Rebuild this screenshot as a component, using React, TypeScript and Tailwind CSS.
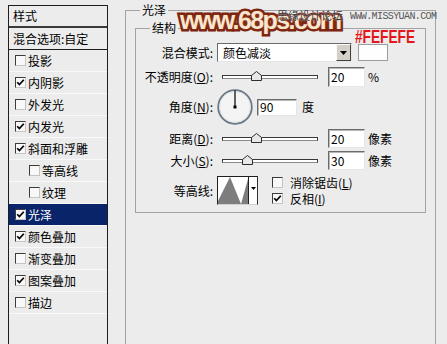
import React from 'react'

type StyleItem = { name: string; on: boolean; sub?: boolean; active?: boolean }

const styleItems: StyleItem[] = [
  { name: '投影', on: false },
  { name: '内阴影', on: true },
  { name: '外发光', on: false },
  { name: '内发光', on: true },
  { name: '斜面和浮雕', on: true },
  { name: '等高线', on: false, sub: true },
  { name: '纹理', on: false, sub: true },
  { name: '光泽', on: true, active: true },
  { name: '颜色叠加', on: true },
  { name: '渐变叠加', on: false },
  { name: '图案叠加', on: true },
  { name: '描边', on: false },
]

function Box({ checked = false }: { checked?: boolean }) {
  return (
    <span className="flex h-[11px] w-[11px] shrink-0 items-center justify-center border border-t-[#3c3c3c] border-l-[#3c3c3c] border-r-[#c4c4c4] border-b-[#c4c4c4] bg-[#f8f8f8]">
      {checked && (
        <svg width="9" height="9" viewBox="0 0 9 9">
          <path d="M1.2 4.2 L3.4 6.6 L7.8 1.8" stroke="#000" strokeWidth="1.7" fill="none" />
        </svg>
      )}
    </span>
  )
}

function Slider({ value, max }: { value: number; max: number }) {
  const left = Math.round((value / max) * 96) + 14
  return (
    <div className="relative ml-[9px] h-[4px] w-[96px] border border-[#383838] border-b-[#8a8a8a] bg-white">
      <svg className="absolute top-[-5px]" style={{ left: left - 5 }} width="11" height="10" viewBox="0 0 11 10">
        <polygon points="5.5,0.5 10.5,4.5 10.5,9.5 0.5,9.5 0.5,4.5" fill="#e8e8e8" stroke="#2c2c2c" />
      </svg>
    </div>
  )
}

function Field({ value, w = 'w-[37px]', h = 'h-[19px]' }: { value: string; w?: string; h?: string }) {
  return (
    <div
      className={`ml-[10px] flex ${h} ${w} items-center border border-t-[#6a6a6a] border-l-[#6a6a6a] border-r-[#e6e6e6] border-b-[#e6e6e6] bg-white pl-[2px] shadow-[inset_1px_1px_0_#b8b8b8]`}
    >
      {value}
    </div>
  )
}

function Label({ children }: { children: React.ReactNode }) {
  return <span className="w-[77px] shrink-0 text-right">{children}</span>
}

export default function App() {
  return (
    <div className="relative flex h-[344px] w-[447px] overflow-hidden bg-[#ececec] font-['Noto_Sans_CJK_SC',sans-serif] text-[12px] leading-[16px] text-black">
      {/* style list */}
      <div className="mt-[5px] ml-[8px] h-[360px] w-[100px] shrink-0 border border-[#1e1e1e]">
        <div className="flex h-[22px] items-center border-b-2 border-[#3a3a3a] pl-[4px]">样式</div>
        <div className="flex h-[22px] items-center border-b border-[#1e1e1e] pl-[4px]">混合选项:自定</div>
        {styleItems.map((s) => (
          <div
            key={s.name}
            className={`flex h-[22px] items-center gap-[2px] border-b border-[#f9f9f9] ${s.sub ? 'pl-[20px]' : 'pl-[6px]'} ${s.active ? 'bg-[#0a246a] text-white' : ''}`}
          >
            <Box checked={s.on} />
            <span>{s.name}</span>
          </div>
        ))}
      </div>

      {/* settings */}
      <fieldset className="mt-[2px] ml-[17px] h-[400px] w-[311px] shrink-0 border border-[#a3a3a3]">
        <legend className="ml-[14px] px-[2px] leading-[16px]">光泽</legend>
        <fieldset className="mt-[2px] ml-[9px] w-[291px] border border-[#a3a3a3] pb-[7px]">
          <legend className="ml-[14px] px-[2px] leading-[16px]">结构</legend>

          <div className="mt-[7px] flex h-[19px] items-center">
            <Label>混合模式:</Label>
            <div className="ml-[4px] flex h-[19px] w-[135px] items-center border border-t-[#6a6a6a] border-l-[#6a6a6a] border-r-[#e6e6e6] border-b-[#e6e6e6] bg-white">
              <span className="flex-1 pl-[5px]">颜色减淡</span>
              <span className="flex h-full w-[15px] items-center justify-center border border-t-[#fafafa] border-l-[#fafafa] border-r-[#404040] border-b-[#404040] bg-[#d4d0c8]">
                <svg width="7" height="4" viewBox="0 0 7 4">
                  <polygon points="0,0 7,0 3.5,4" fill="#000" />
                </svg>
              </span>
            </div>
            <div className="ml-[6px] h-[17px] w-[30px] border border-[#9c9c9c] bg-[#fefefe]" />
          </div>

          <div className="mt-[5px] flex h-[20px] items-center">
            <Label>
              不透明度(<u>O</u>):
            </Label>
            <Slider value={20} max={100} />
            <Field value="20" h="h-[20px]" />
            <span className="ml-[3px]">%</span>
          </div>

          <div className="mt-[2px] flex h-[36px] items-center">
            <Label>
              角度(<u>N</u>):
            </Label>
            <svg className="ml-[4px]" width="36" height="36" viewBox="0 0 36 36">
              <circle cx="18" cy="18" r="16.8" fill="#f4f4f5" stroke="#6b7686" strokeWidth="1.8" />
              <circle cx="18" cy="18" r="15.4" fill="none" stroke="#d6dae0" strokeWidth="0.8" />
              <line x1="18" y1="18" x2="18" y2="1.5" stroke="#000" strokeWidth="1.2" />
              <rect x="16.5" y="16.5" width="3" height="3" fill="#000" />
            </svg>
            <div className="ml-[4px] flex h-[17px] w-[40px] items-center border border-t-[#6a6a6a] border-l-[#6a6a6a] border-r-[#e6e6e6] border-b-[#e6e6e6] bg-white pl-[2px] shadow-[inset_1px_1px_0_#b8b8b8]">
              90
            </div>
            <span className="ml-[5px]">度</span>
          </div>

          <div className="mt-[4px] flex h-[19px] items-center">
            <Label>
              距离(<u>D</u>):
            </Label>
            <Slider value={20} max={100} />
            <Field value="20" />
            <span className="ml-[3px]">像素</span>
          </div>

          <div className="mt-[3px] flex h-[19px] items-center">
            <Label>
              大小(<u>S</u>):
            </Label>
            <Slider value={10} max={100} />
            <Field value="30" />
            <span className="ml-[3px]">像素</span>
          </div>

          <div className="mt-[6px] flex h-[29px] items-center">
            <Label>等高线:</Label>
            <div className="ml-[4px] flex h-[29px] w-[41px] border border-t-[#202020] border-l-[#202020] border-r-[#303030] border-b-[#d0d0d0] bg-white">
              <svg width="30" height="27" viewBox="0 0 30 27">
                <path d="M0 27 L0 24 L12 0 L23 27 L30 2 L30 27 Z" fill="#7d7d7d" />
              </svg>
              <div className="flex flex-1 justify-center border-l border-[#202020] pt-[10px]">
                <svg width="5" height="3" viewBox="0 0 5 3">
                  <polygon points="0,0 5,0 2.5,3" fill="#000" />
                </svg>
              </div>
            </div>
            <div className="ml-[14px] flex flex-col gap-[3px] self-start">
              <div className="flex h-[13px] items-center gap-[7px]">
                <Box />
                <span>
                  消除锯齿(<u>L</u>)
                </span>
              </div>
              <div className="flex h-[13px] items-center gap-[7px]">
                <Box checked />
                <span>
                  反相(<u>I</u>)
                </span>
              </div>
            </div>
          </div>
        </fieldset>
      </fieldset>

      {/* watermark and colour note laid over the dialog */}
      <div className="absolute top-[8px] left-[180px] font-['Liberation_Sans',sans-serif] text-[25px] leading-[25px] font-bold tracking-[-1.6px] text-[#f8e6cf] [paint-order:stroke_fill] [-webkit-text-stroke:5px_#7a220e] [text-shadow:0_0_3px_#a0482a]">
        www.68ps.com
      </div>
      <div className="absolute top-[9px] left-[277px] text-[11px] leading-[12px] text-[#333] [text-shadow:0_0_1px_#fff]">
        思缘设计论坛
      </div>
      <div className="absolute top-[12px] left-[350px] font-['Liberation_Mono',monospace] text-[10px] leading-[10px] tracking-[-0.6px] text-[#555]">
        WWW.MISSYUAN.COM
      </div>
      <div className="absolute top-[28px] left-[355px] origin-left scale-x-[0.76] font-['Liberation_Sans',sans-serif] text-[18px] leading-[18px] font-bold text-[#e3161b]">
        #FEFEFE
      </div>
    </div>
  )
}
